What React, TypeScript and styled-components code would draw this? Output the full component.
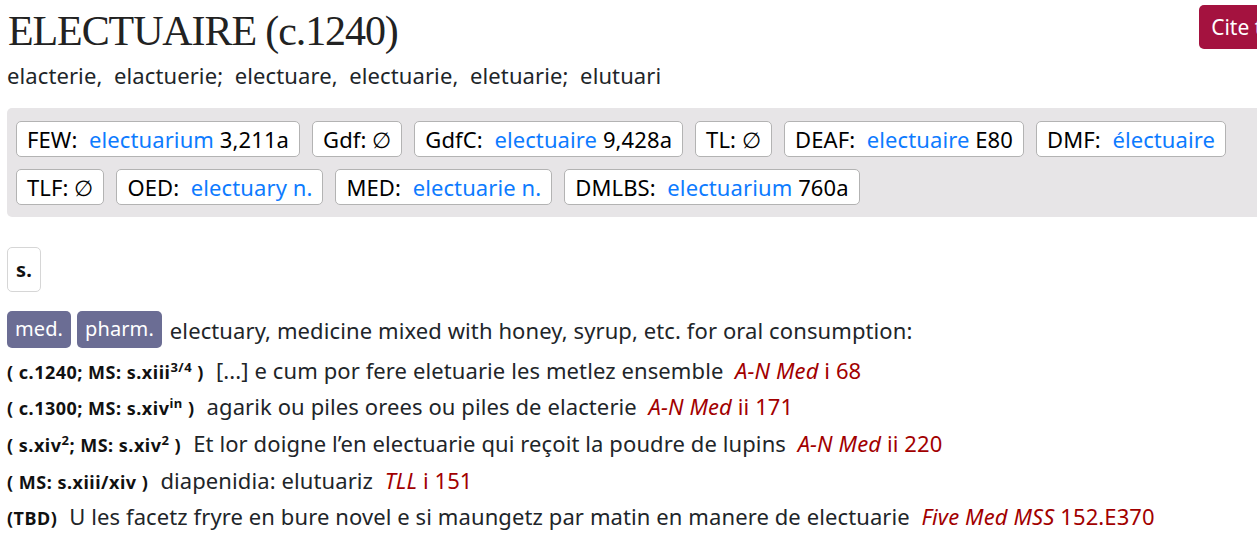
import React from "react";
import styled, { createGlobalStyle } from "styled-components";

const Global = createGlobalStyle`
  html, body { margin: 0; padding: 0; background: #fff; overflow: hidden; }
  body { font-family: "Noto Sans", "Open Sans", sans-serif; color: #212529; }
`;

const Page = styled.div`
  width: 1300px;
  padding: 0 7px;
  box-sizing: border-box;
  font-size: 22px;
  letter-spacing: 0.1px;
`;

const Header = styled.div`
  display: flex;
  justify-content: space-between;
  align-items: flex-start;
`;

const Title = styled.h1`
  margin: 7px 0 0 1px;
  font-family: "Liberation Serif", serif;
  font-weight: 400;
  font-size: 42px;
  line-height: 48px;
  color: #222;
  letter-spacing: -1.1px;
`;

const CiteButton = styled.button`
  margin-top: 5px;
  margin-right: -67px;
  height: 44px;
  padding: 0 12px;
  background: #a4123f;
  color: #fff;
  border: none;
  border-radius: 5px;
  font-family: "Noto Sans", sans-serif;
  font-size: 21px;
  white-space: nowrap;
`;

const Variants = styled.div`
  margin-top: 5px;
  line-height: 30px;
  white-space: pre;
`;

const XrefBox = styled.div`
  margin-top: 18px;
  background: #e7e5e7;
  border-radius: 5px;
  padding: 13px 9px 12px;
  display: flex;
  flex-wrap: wrap;
  gap: 12px;
`;

const Chip = styled.div`
  height: 36px;
  box-sizing: border-box;
  padding: 0 10px;
  background: #fff;
  border: 1px solid #b3b3b3;
  border-radius: 5px;
  display: flex;
  align-items: center;
  white-space: pre;
  color: #000;
  line-height: 1;
`;

const Link = styled.span`
  color: #0d7bff;
`;

const PosBox = styled.div`
  margin-top: 30px;
  width: 34px;
  height: 45px;
  box-sizing: border-box;
  border: 1px solid #d6d6d6;
  border-radius: 5px;
  display: flex;
  align-items: center;
  justify-content: center;
  font-weight: 700;
  font-size: 20px;
  color: #111;
`;

const SenseLine = styled.div`
  margin-top: 19px;
  display: flex;
  align-items: center;
  gap: 6px;
  line-height: 28px;
`;

const Badge = styled.span`
  background: #6b6d94;
  color: #fff;
  border-radius: 5px;
  padding: 4px 8px 5px;
  font-size: 20px;
  line-height: 28px;
`;

const Definition = styled.span`
  margin-left: 2px;
`;

const Quote = styled.div`
  margin-top: 7.7px;
  height: 29px;
  display: flex;
  align-items: baseline;
  white-space: pre;
  line-height: 29px;
`;

const DateTag = styled.span`
  font-weight: 700;
  font-size: 18px;
  letter-spacing: 0.5px;
  color: #111;
  margin-right: 12px;
  line-height: 29px;
  sup { font-size: 13px; line-height: 0; vertical-align: 7px; }
`;

const Cite = styled.span`
  color: #a20000;
  i { font-style: italic; }
`;

type XRef = { label: string; link?: string; extra?: string };

const row: XRef[] = [
  { label: "FEW:", link: "electuarium", extra: "3,211a" },
  { label: "Gdf: \u2205" },
  { label: "GdfC:", link: "electuaire", extra: "9,428a" },
  { label: "TL: \u2205" },
  { label: "DEAF:", link: "electuaire", extra: "E80" },
  { label: "DMF:", link: "\u00e9lectuaire" },
  { label: "TLF: \u2205" },
  { label: "OED:", link: "electuary n." },
  { label: "MED:", link: "electuarie n." },
  { label: "DMLBS:", link: "electuarium", extra: "760a" },
];

export default function App() {
  return (
    <Page>
      <Global />
      <Header>
        <Title>ELECTUAIRE (c.1240)</Title>
        <CiteButton>Cite this entry</CiteButton>
      </Header>
      <Variants>elacterie,  elactuerie;  electuare,  electuarie,  eletuarie;  elutuari</Variants>
      <XrefBox>
        {row.map((r) => (
          <Chip key={r.label}>
            {r.label}
            {r.link && (
              <>
                {"  "}
                <Link>{r.link}</Link>
              </>
            )}
            {r.extra && " " + r.extra}
            {r.label === "DMF:" && "  "}
          </Chip>
        ))}
      </XrefBox>
      <PosBox>s.</PosBox>
      <SenseLine>
        <Badge>med.</Badge>
        <Badge>pharm.</Badge>
        <Definition>electuary, medicine mixed with honey, syrup, etc. for oral consumption:</Definition>
      </SenseLine>
      <Quote>
        <DateTag>( c.1240; MS: s.xiii<sup>3/4</sup> )</DateTag>
        [...] e cum por fere eletuarie les metlez ensemble{"  "}
        <Cite><i>A-N Med</i> i 68</Cite>
      </Quote>
      <Quote>
        <DateTag>( c.1300; MS: s.xiv<sup>in</sup> )</DateTag>
        agarik ou piles orees ou piles de elacterie{"  "}
        <Cite><i>A-N Med</i> ii 171</Cite>
      </Quote>
      <Quote>
        <DateTag>( s.xiv<sup>2</sup>; MS: s.xiv<sup>2</sup> )</DateTag>
        Et lor doigne l’en electuarie qui reçoit la poudre de lupins{"  "}
        <Cite><i>A-N Med</i> ii 220</Cite>
      </Quote>
      <Quote>
        <DateTag>( MS: s.xiii/xiv )</DateTag>
        diapenidia: elutuariz{"  "}
        <Cite><i>TLL</i> i 151</Cite>
      </Quote>
      <Quote>
        <DateTag>(TBD)</DateTag>
        U les facetz fryre en bure novel e si maungetz par matin en manere de electuarie{"  "}
        <Cite><i>Five Med MSS</i> 152.E370</Cite>
      </Quote>
    </Page>
  );
}
